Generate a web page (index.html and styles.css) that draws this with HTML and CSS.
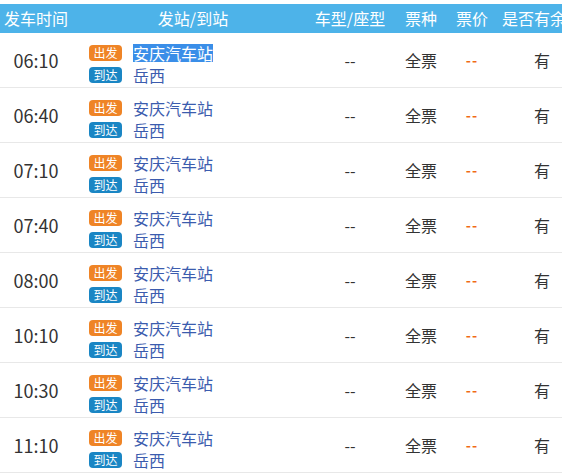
FILE: index.html
```html
<!DOCTYPE html>
<html lang="zh-CN">
<head>
<meta charset="utf-8">
<title>班次</title>
<link rel="stylesheet" href="styles.css">
</head>
<body>
<div class="wrap">
<table class="schedule">
  <colgroup>
    <col class="c-time"><col class="c-station"><col class="c-type"><col class="c-kind"><col class="c-price"><col class="c-left">
  </colgroup>
  <thead>
    <tr>
      <th>发车时间</th><th>发站/到站</th><th>车型/座型</th><th>票种</th><th>票价</th><th>是否有余票</th>
    </tr>
  </thead>
  <tbody>
    <tr>
      <td class="time">06:10</td>
      <td class="station">
        <div class="line"><span class="badge dep">出发</span><span class="name sel">安庆汽车站</span></div>
        <div class="line"><span class="badge arr">到达</span><span class="name">岳西</span></div>
      </td>
      <td>--</td><td>全票</td><td class="price">--</td><td>有</td>
    </tr>
    <tr>
      <td class="time">06:40</td>
      <td class="station">
        <div class="line"><span class="badge dep">出发</span><span class="name">安庆汽车站</span></div>
        <div class="line"><span class="badge arr">到达</span><span class="name">岳西</span></div>
      </td>
      <td>--</td><td>全票</td><td class="price">--</td><td>有</td>
    </tr>
    <tr>
      <td class="time">07:10</td>
      <td class="station">
        <div class="line"><span class="badge dep">出发</span><span class="name">安庆汽车站</span></div>
        <div class="line"><span class="badge arr">到达</span><span class="name">岳西</span></div>
      </td>
      <td>--</td><td>全票</td><td class="price">--</td><td>有</td>
    </tr>
    <tr>
      <td class="time">07:40</td>
      <td class="station">
        <div class="line"><span class="badge dep">出发</span><span class="name">安庆汽车站</span></div>
        <div class="line"><span class="badge arr">到达</span><span class="name">岳西</span></div>
      </td>
      <td>--</td><td>全票</td><td class="price">--</td><td>有</td>
    </tr>
    <tr>
      <td class="time">08:00</td>
      <td class="station">
        <div class="line"><span class="badge dep">出发</span><span class="name">安庆汽车站</span></div>
        <div class="line"><span class="badge arr">到达</span><span class="name">岳西</span></div>
      </td>
      <td>--</td><td>全票</td><td class="price">--</td><td>有</td>
    </tr>
    <tr>
      <td class="time">10:10</td>
      <td class="station">
        <div class="line"><span class="badge dep">出发</span><span class="name">安庆汽车站</span></div>
        <div class="line"><span class="badge arr">到达</span><span class="name">岳西</span></div>
      </td>
      <td>--</td><td>全票</td><td class="price">--</td><td>有</td>
    </tr>
    <tr>
      <td class="time">10:30</td>
      <td class="station">
        <div class="line"><span class="badge dep">出发</span><span class="name">安庆汽车站</span></div>
        <div class="line"><span class="badge arr">到达</span><span class="name">岳西</span></div>
      </td>
      <td>--</td><td>全票</td><td class="price">--</td><td>有</td>
    </tr>
    <tr>
      <td class="time">11:10</td>
      <td class="station">
        <div class="line"><span class="badge dep">出发</span><span class="name">安庆汽车站</span></div>
        <div class="line"><span class="badge arr">到达</span><span class="name">岳西</span></div>
      </td>
      <td>--</td><td>全票</td><td class="price">--</td><td>有</td>
    </tr>
  </tbody>
</table>
</div>
</body>
</html>
```
FILE: styles.css
```css
html, body {
  margin: 0;
  padding: 0;
  background: #fff;
}
body {
  font-family: "Noto Sans CJK SC", "Noto Sans", sans-serif;
  color: #333;
  overflow: hidden;
}
.wrap {
  width: 562px;
  overflow: hidden;
  padding-top: 4px;
}
.schedule {
  width: 596px;
  table-layout: fixed;
  border-collapse: collapse;
  border-spacing: 0;
}
.c-time { width: 72px; }
.c-station { width: 242px; }
.c-type { width: 72px; }
.c-kind { width: 70px; }
.c-price { width: 32px; }
.c-left { width: 108px; }

.schedule th {
  background: #4db3e9;
  color: #fff;
  font-weight: normal;
  font-size: 16px;
  height: 29px;
  line-height: 29px;
  padding: 0;
  text-align: center;
  white-space: nowrap;
}
.schedule td {
  height: 54px;
  padding: 0;
  border-bottom: 1px solid #e8e8e8;
  text-align: center;
  font-size: 16px;
  color: #333;
  vertical-align: middle;
  white-space: nowrap;
}
.schedule td.time {
  font-size: 18px;
  color: #333;
}
.schedule td.price {
  color: #f06a14;
  font-weight: bold;
  font-size: 14px;
  letter-spacing: 1px;
}
.schedule td.station {
  text-align: left;
  vertical-align: top;
  box-sizing: border-box;
  padding: 9px 0 0 17px;
}
.line {
  display: flex;
  align-items: center;
  height: 22px;
}
.badge {
  display: inline-block;
  width: 33px;
  height: 16px;
  line-height: 16px;
  border-radius: 4px;
  color: #fff;
  font-size: 12px;
  text-align: center;
  margin-right: 11px;
}
.badge.dep { background: #ef8426; }
.badge.arr { background: #1a86c4; }
.name {
  color: #3b5cae;
  font-size: 16px;
  line-height: 18px;
}
.name.sel {
  background: #3a8ee8;
  color: #fff;
}
```
